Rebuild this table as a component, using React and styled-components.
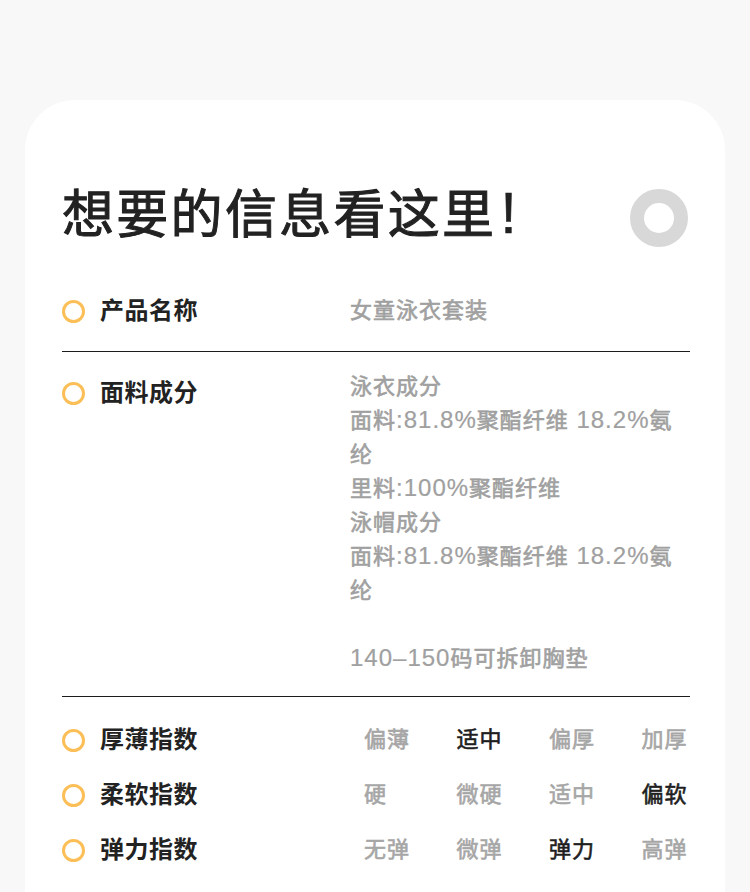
import React from "react";
import styled, { createGlobalStyle } from "styled-components";

const Global = createGlobalStyle`
  html, body {
    margin: 0;
    padding: 0;
    background: #f8f8f8;
  }
  body {
    font-family: "Liberation Sans", "Noto Sans CJK SC", sans-serif;
  }
`;

const Page = styled.div`
  padding: 100px 25px 0;
  overflow: hidden;
  height: 892px;
  box-sizing: border-box;
`;

const Card = styled.section`
  background: #ffffff;
  border-radius: 50px 50px 0 0;
  padding: 83px 35px 40px 37px;
`;

const Header = styled.div`
  display: flex;
  align-items: center;
  justify-content: space-between;
  margin-bottom: 20px;
`;

const Title = styled.h1`
  margin: 0;
  font-size: 52px;
  line-height: 65px;
  font-weight: 400;
  letter-spacing: 2.3px;
  color: #222222;
  -webkit-text-stroke: 1px #222222;
`;

const Bang = styled.span`
  font-size: 58px;
  line-height: 1;
  padding-left: 4px;
  -webkit-text-stroke: 0.6px #222222;
`;

const Badge = styled.div`
  width: 58px;
  height: 58px;
  box-sizing: border-box;
  border-radius: 50%;
  border: 14px solid #d8d8d8;
  margin-top: 5px;
  margin-right: 2px;
`;

const Row = styled.div`
  display: flex;
  align-items: ${(p) => (p.$top ? "flex-start" : "center")};
  padding: ${(p) => p.$pad};
  border-bottom: 1px solid #1c1c1c;
`;

const Label = styled.div`
  flex: 0 0 288px;
  display: flex;
  align-items: center;
  gap: 15px;
  font-size: 24px;
  line-height: 46px;
  font-weight: 700;
  letter-spacing: 0.5px;
  color: #222222;
`;

const Dot = styled.span`
  width: 23px;
  height: 23px;
  box-sizing: border-box;
  border-radius: 50%;
  border: 3.5px solid #fcbf58;
  flex: 0 0 auto;
`;

const Value = styled.div`
  width: 330px;
  font-size: 22px;
  line-height: 34px;
  font-weight: 400;
  letter-spacing: 1px;
  color: #a0a0a0;
  -webkit-text-stroke: 0.6px #a0a0a0;
`;

const Line = styled.div`
  min-height: 34px;
`;

const Num = styled.span`
  font-size: 24px;
  line-height: 1;
  -webkit-text-stroke: 0.2px currentColor;
`;

const IndexBlock = styled.div`
  display: flex;
  flex-direction: column;
  gap: 9px;
  padding: 20px 0 19px;
  border-bottom: 1px solid #1c1c1c;
`;

const IndexRow = styled.div`
  display: flex;
  align-items: center;
`;

const Options = styled.div`
  display: grid;
  grid-template-columns: repeat(4, 92.5px);
  margin-left: 14px;
`;

const Option = styled.span`
  font-size: 22px;
  line-height: 46px;
  font-weight: 400;
  letter-spacing: 1px;
  color: ${(p) => (p.$on ? "#1e1e1e" : "#a6a6a6")};
  -webkit-text-stroke: 0.6px ${(p) => (p.$on ? "#1e1e1e" : "#a6a6a6")};
`;

const fabric = [
  "泳衣成分",
  "面料:81.8%聚酯纤维 18.2%氨纶",
  "里料:100%聚酯纤维",
  "泳帽成分",
  "面料:81.8%聚酯纤维 18.2%氨纶",
  "",
  "140–150码可拆卸胸垫",
];

function Mixed({ text }) {
  const parts = text.split(/([0-9.:%–\- ]+)/).filter(Boolean);
  return parts.map((p, i) =>
    /^[0-9.:%–\- ]+$/.test(p) ? <Num key={i}>{p}</Num> : <React.Fragment key={i}>{p}</React.Fragment>
  );
}

const indices = [
  { name: "厚薄指数", opts: ["偏薄", "适中", "偏厚", "加厚"], on: 1 },
  { name: "柔软指数", opts: ["硬", "微硬", "适中", "偏软"], on: 3 },
  { name: "弹力指数", opts: ["无弹", "微弹", "弹力", "高弹"], on: 2 },
];

export default function App() {
  return (
    <>
      <Global />
      <Page>
        <Card>
          <Header>
            <Title>
              想要的信息看这里<Bang>!</Bang>
            </Title>
            <Badge />
          </Header>
          <Row $pad="20px 0 17px">
            <Label>
              <Dot />
              产品名称
            </Label>
            <Value>女童泳衣套装</Value>
          </Row>
          <Row $top $pad="18px 0 20px">
            <Label>
              <Dot />
              面料成分
            </Label>
            <Value>
              {fabric.map((t, i) => (
                <Line key={i}>
                  <Mixed text={t} />
                </Line>
              ))}
            </Value>
          </Row>
          <IndexBlock>
            {indices.map((it) => (
              <IndexRow key={it.name}>
                <Label>
                  <Dot />
                  {it.name}
                </Label>
                <Options>
                  {it.opts.map((o, i) => (
                    <Option key={o} $on={i === it.on}>
                      {o}
                    </Option>
                  ))}
                </Options>
              </IndexRow>
            ))}
          </IndexBlock>
        </Card>
      </Page>
    </>
  );
}
